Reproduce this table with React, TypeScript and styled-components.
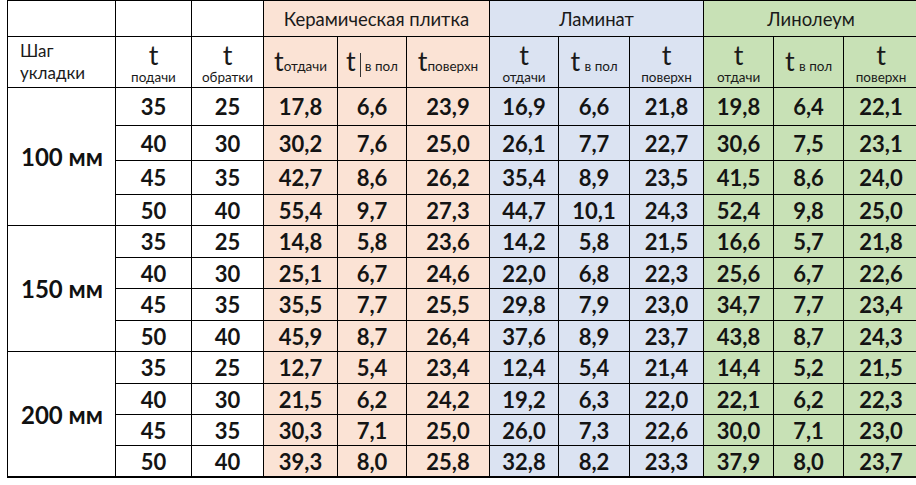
import React from "react";
import styled, { createGlobalStyle } from "styled-components";

const Global = createGlobalStyle`
  html, body { margin: 0; padding: 0; background: #ffffff; }
  body { font-family: Lato, "Open Sans", sans-serif; color: #111; }
`;

const COLORS = {
  none: "#ffffff",
  ceramic: "#fbe3d5",
  laminate: "#dbe3f2",
  linoleum: "#c8e1b6",
} as const;

type Tone = keyof typeof COLORS;

const Wrap = styled.div`
  padding: 0 0 0 7px;
  width: 916px;
  height: 485px;
  overflow: hidden;
  box-sizing: border-box;
`;

const Table = styled.table`
  border-collapse: collapse;
  table-layout: fixed;
  width: 911px;
  border-bottom: 2px solid #000;
`;

const GroupHead = styled.th<{ $tone: Tone }>`
  background: ${(p) => COLORS[p.$tone]};
  border: 1px solid #000;
  height: 35px;
  padding: 0;
  font-weight: 400;
  font-size: 18.5px;
  text-align: center;
  vertical-align: middle;
  color: #1a1a1a;
`;

const SubHead = styled.th<{ $tone: Tone; $align?: "left" | "center" }>`
  background: ${(p) => COLORS[p.$tone]};
  border: 1px solid #000;
  height: 50px;
  padding: 0;
  padding-left: ${(p) => (p.$align === "left" ? "12px" : "0")};
  font-weight: 400;
  font-size: 17px;
  line-height: 22px;
  text-align: ${(p) => p.$align ?? "center"};
  vertical-align: middle;
  color: #1a1a1a;
`;

const BigT = styled.span`
  font-size: 27px;
  line-height: 26px;
`;

const Small = styled.span`
  font-size: 13.5px;
`;

const Stack = styled.div`
  display: flex;
  flex-direction: column;
  align-items: center;
  line-height: 1;
  gap: 3px;
  padding-top: 2px;
`;

const Cursor = styled.span`
  display: inline-block;
  width: 0;
  height: 24px;
  border-left: 1px solid #333;
  margin: 0 4px 0 4px;
  vertical-align: -6px;
`;

const StepCell = styled.td`
  background: #fff;
  border: 1px solid #000;
  padding: 0 0 0 13px;
  font-weight: 700;
  font-size: 24px;
  vertical-align: middle;
  text-align: left;
  white-space: nowrap;
`;

const DataCell = styled.td<{ $tone: Tone; $h: number }>`
  background: ${(p) => COLORS[p.$tone]};
  border: 1px solid #000;
  height: ${(p) => p.$h}px;
  padding: 0;
  font-weight: 700;
  font-size: 22px;
  text-align: center;
  vertical-align: middle;
  color: #141414;
`;

const widths = [108, 76, 72, 74, 69, 83, 69, 71, 74, 70, 70, 75];

type Row = [string, string, string[]];

const groups: { label: string; heights: number[]; rows: Row[] }[] = [
  {
    label: "100 мм",
    heights: [37, 34, 33, 30],
    rows: [
      ["35", "25", ["17,8", "6,6", "23,9", "16,9", "6,6", "21,8", "19,8", "6,4", "22,1"]],
      ["40", "30", ["30,2", "7,6", "25,0", "26,1", "7,7", "22,7", "30,6", "7,5", "23,1"]],
      ["45", "35", ["42,7", "8,6", "26,2", "35,4", "8,9", "23,5", "41,5", "8,6", "24,0"]],
      ["50", "40", ["55,4", "9,7", "27,3", "44,7", "10,1", "24,3", "52,4", "9,8", "25,0"]],
    ],
  },
  {
    label: "150 мм",
    heights: [31, 30, 31, 30],
    rows: [
      ["35", "25", ["14,8", "5,8", "23,6", "14,2", "5,8", "21,5", "16,6", "5,7", "21,8"]],
      ["40", "30", ["25,1", "6,7", "24,6", "22,0", "6,8", "22,3", "25,6", "6,7", "22,6"]],
      ["45", "35", ["35,5", "7,7", "25,5", "29,8", "7,9", "23,0", "34,7", "7,7", "23,4"]],
      ["50", "40", ["45,9", "8,7", "26,4", "37,6", "8,9", "23,7", "43,8", "8,7", "24,3"]],
    ],
  },
  {
    label: "200 мм",
    heights: [31, 30, 30, 30],
    rows: [
      ["35", "25", ["12,7", "5,4", "23,4", "12,4", "5,4", "21,4", "14,4", "5,2", "21,5"]],
      ["40", "30", ["21,5", "6,2", "24,2", "19,2", "6,3", "22,0", "22,1", "6,2", "22,3"]],
      ["45", "35", ["30,3", "7,1", "25,0", "26,0", "7,3", "22,6", "30,0", "7,1", "23,0"]],
      ["50", "40", ["39,3", "8,0", "25,8", "32,8", "8,2", "23,3", "37,9", "8,0", "23,7"]],
    ],
  },
];

const toneFor = (i: number): Tone => (i < 3 ? "ceramic" : i < 6 ? "laminate" : "linoleum");

const Stacked = ({ sub }: { sub: string }) => (
  <Stack>
    <BigT>t</BigT>
    <Small>{sub}</Small>
  </Stack>
);

export default function App() {
  return (
    <Wrap>
      <Global />
      <Table>
        <colgroup>
          {widths.map((w, i) => (
            <col key={i} style={{ width: w }} />
          ))}
        </colgroup>
        <thead>
          <tr>
            <GroupHead $tone="none" />
            <GroupHead $tone="none" />
            <GroupHead $tone="none" />
            <GroupHead $tone="ceramic" colSpan={3}>Керамическая плитка</GroupHead>
            <GroupHead $tone="laminate" colSpan={3}>Ламинат</GroupHead>
            <GroupHead $tone="linoleum" colSpan={3}>Линолеум</GroupHead>
          </tr>
          <tr>
            <SubHead $tone="none" $align="left">
              Шаг
              <br />
              укладки
            </SubHead>
            <SubHead $tone="none">
              <Stacked sub="подачи" />
            </SubHead>
            <SubHead $tone="none">
              <Stacked sub="обратки" />
            </SubHead>
            <SubHead $tone="ceramic">
              <BigT>t</BigT>
              <Small>отдачи</Small>
            </SubHead>
            <SubHead $tone="ceramic">
              <BigT>t</BigT>
              <Cursor />
              <Small>в пол</Small>
            </SubHead>
            <SubHead $tone="ceramic">
              <BigT>t</BigT>
              <Small>поверхн</Small>
            </SubHead>
            <SubHead $tone="laminate">
              <Stacked sub="отдачи" />
            </SubHead>
            <SubHead $tone="laminate">
              <BigT>t</BigT> <Small>в пол</Small>
            </SubHead>
            <SubHead $tone="laminate">
              <Stacked sub="поверхн" />
            </SubHead>
            <SubHead $tone="linoleum">
              <Stacked sub="отдачи" />
            </SubHead>
            <SubHead $tone="linoleum">
              <BigT>t</BigT> <Small>в пол</Small>
            </SubHead>
            <SubHead $tone="linoleum">
              <Stacked sub="поверхн" />
            </SubHead>
          </tr>
        </thead>
        <tbody>
          {groups.map((g) =>
            g.rows.map(([a, b, vals], ri) => (
              <tr key={g.label + ri}>
                {ri === 0 && <StepCell rowSpan={4}>{g.label}</StepCell>}
                <DataCell $tone="none" $h={g.heights[ri]}>{a}</DataCell>
                <DataCell $tone="none" $h={g.heights[ri]}>{b}</DataCell>
                {vals.map((v, vi) => (
                  <DataCell key={vi} $tone={toneFor(vi)} $h={g.heights[ri]}>
                    {v}
                  </DataCell>
                ))}
              </tr>
            ))
          )}
        </tbody>
      </Table>
    </Wrap>
  );
}
